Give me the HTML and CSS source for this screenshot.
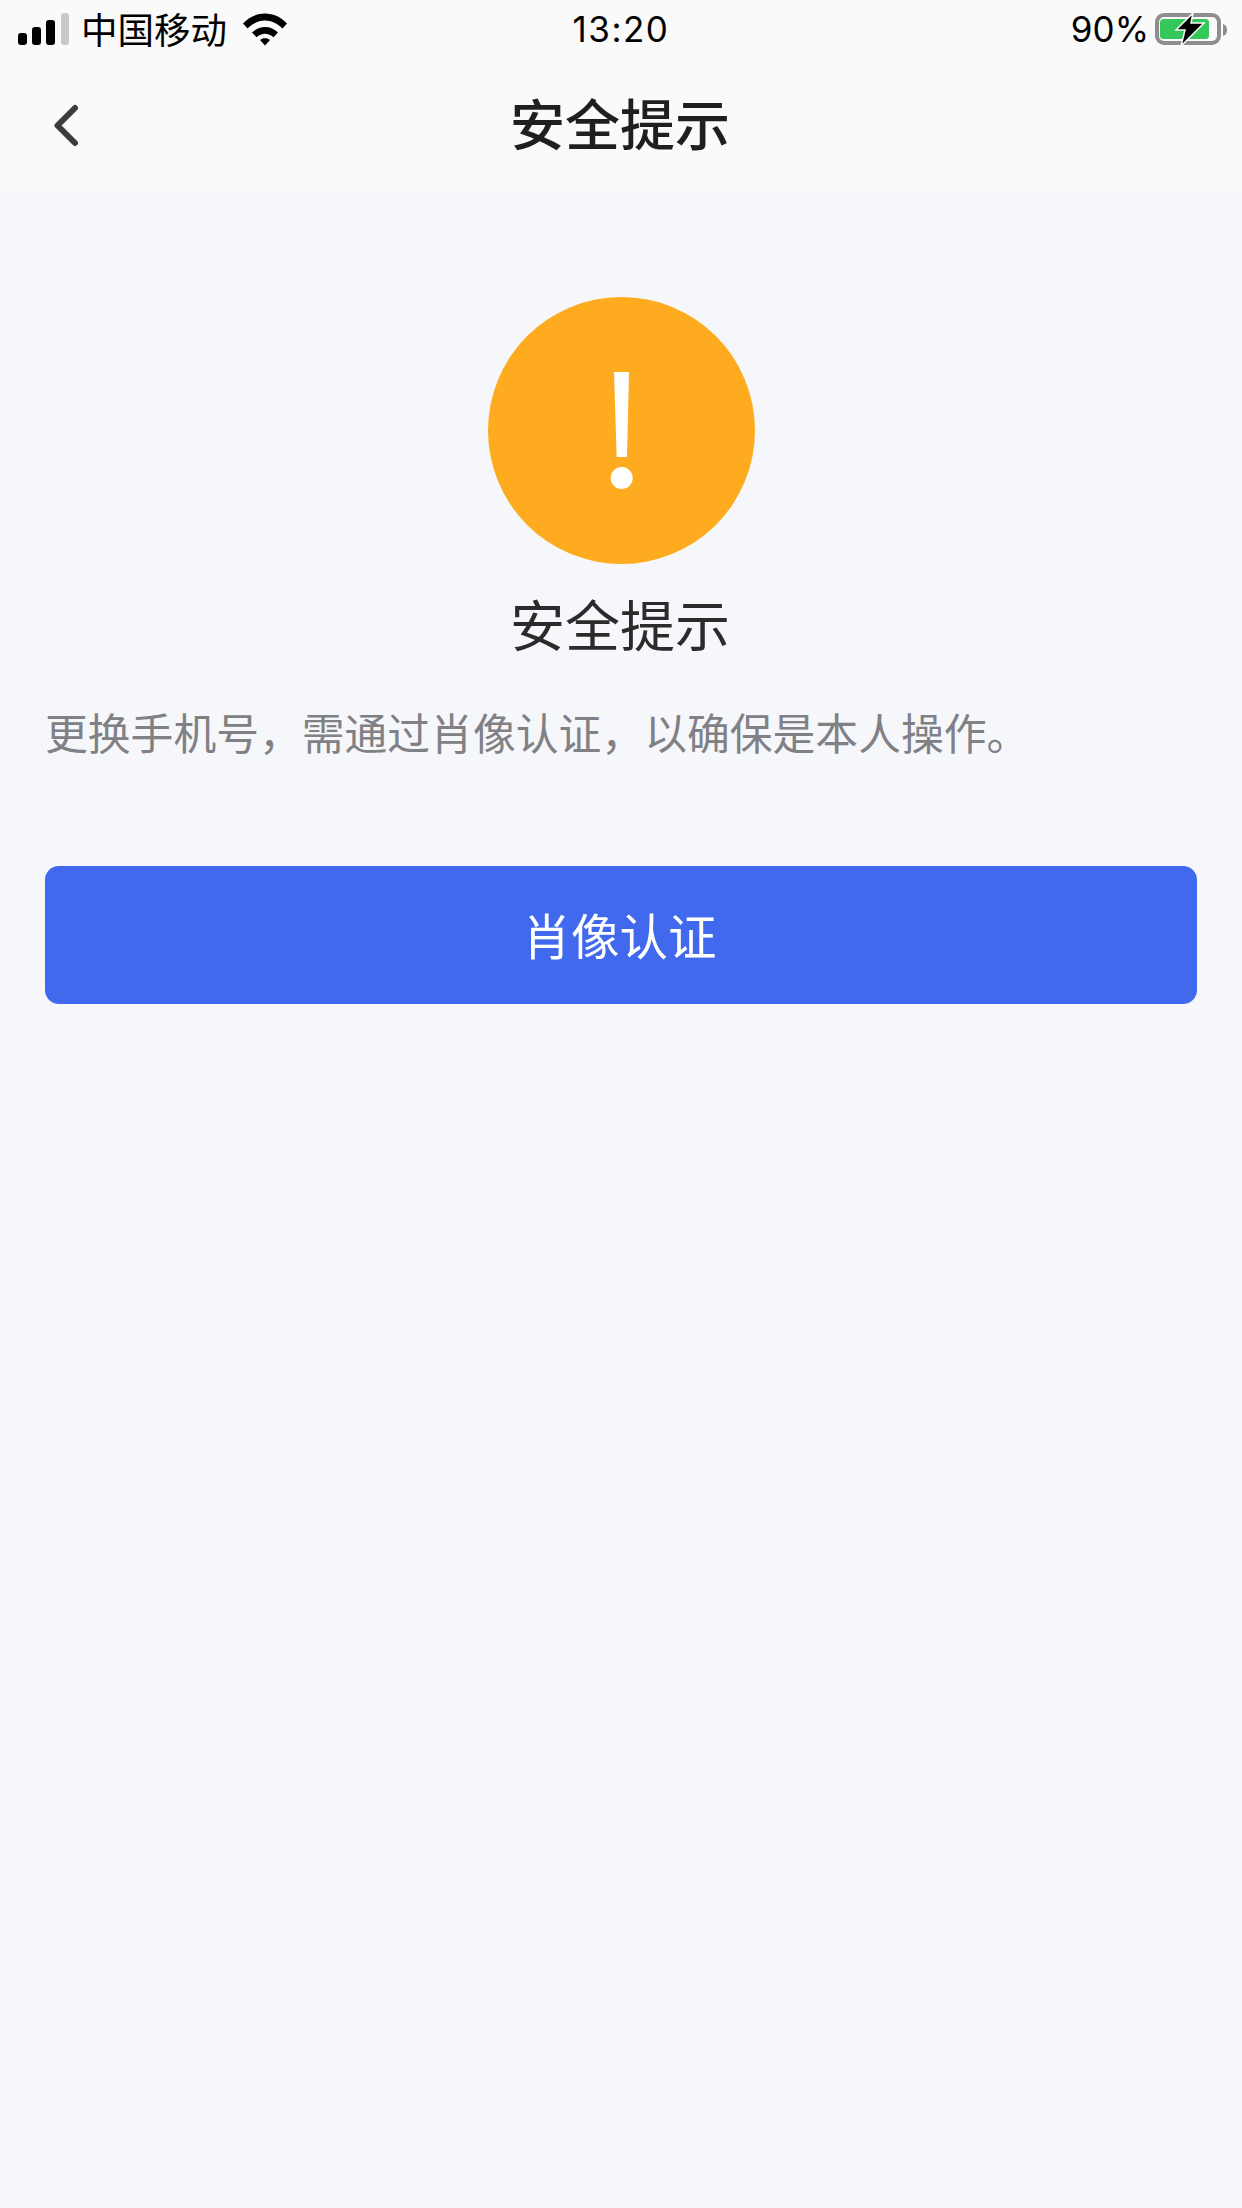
FILE: index.html
```html
<!DOCTYPE html>
<html lang="zh-CN">
<head>
    <meta charset="UTF-8">
    <meta name="viewport" content="width=device-width, initial-scale=1.0">
    <title>安全提示</title>
    <link rel="stylesheet" href="styles.css">
</head>
<body>
<!-- 顶部区域 -->
<header class="top">
    <div class="status-bar">
        <div class="status-left">
            <svg class="signal" width="52" height="32" viewBox="0 0 52 32">
                <rect x="0" y="20" width="9" height="12" rx="3" fill="#000"/>
                <rect x="14" y="14" width="9" height="18" rx="3" fill="#000"/>
                <rect x="28" y="7" width="9" height="25" rx="3" fill="#000"/>
                <rect x="43" y="0" width="8" height="32" rx="3" fill="#c8c8c8"/>
            </svg>
            <span class="carrier">中国移动</span>
            <svg class="wifi" width="46" height="34" viewBox="0 0 46 34">
                <path d="M1 11.5C7 5 14.5 1.5 23 1.5S39 5 45 11.5L40.5 16.5C35.5 11.5 29.5 8.5 23 8.5S10.5 11.5 5.5 16.5Z" fill="#000"/>
                <path d="M10 20.5C13.5 17 18 15 23 15S32.5 17 36 20.5L31.5 25.2C29 23 26 21.8 23 21.8S17 23 14.5 25.2Z" fill="#000"/>
                <path d="M18 28C19.5 26.8 21 26.2 23 26.2S26.5 26.8 28 28L23 33.5Z" fill="#000"/>
            </svg>
        </div>
        <span class="time">13:20</span>
        <div class="status-right">
            <span class="percent">90%</span>
            <svg class="battery" width="74" height="36" viewBox="0 0 74 36">
                <rect x="2" y="4" width="62" height="28" rx="7" fill="none" stroke="#8e8e8e" stroke-width="4"/>
                <rect x="5" y="8" width="49" height="20" rx="3.5" fill="#34c759"/>
                <path d="M68 13C71 14 72 16 72 19S71 24 68 25Z" fill="#8e8e8e"/>
                <path d="M38 2L21 19H30L26 35L49 12H36Z" fill="#000" stroke="#fafafa" stroke-width="1.5"/>
            </svg>
        </div>
    </div>
    <div class="nav-bar">
        <svg class="back" width="30" height="46" viewBox="0 0 30 46">
            <path d="M24 6L6.5 23.5L24 41" fill="none" stroke="#3c3c3c" stroke-width="6" stroke-linecap="round" stroke-linejoin="round"/>
        </svg>
        <h1>安全提示</h1>
    </div>
</header>

<!-- 提示内容 -->
<main class="content">
    <div class="warn-icon">
        <svg width="267" height="267" viewBox="0 0 267 267">
            <circle cx="133.5" cy="133.5" r="133.5" fill="#ffab1f"/>
            <path d="M126 75H141L139 160H128.7Z" fill="#fff"/>
            <circle cx="133.7" cy="181" r="11" fill="#fff"/>
        </svg>
    </div>
    <h2>安全提示</h2>
    <p class="desc">更换手机号，需通过肖像认证，以确保是本人操作。</p>
    <button class="primary-btn">肖像认证</button>
</main>
</body>
</html>
```

FILE: styles.css
```css
html, body {
    margin: 0;
    padding: 0;
}

body {
    width: 1242px;
    height: 2208px;
    overflow: hidden;
    background-color: #f5f7fb;
    font-family: "Noto Sans CJK SC", sans-serif;
}

.top {
    height: 192px;
    background-color: #fafafa;
}

.status-bar {
    height: 58px;
    padding: 0 13px;
    display: grid;
    grid-template-columns: 1fr auto 1fr;
    align-items: center;
    font-size: 36px;
    color: #000;
}

.status-left {
    display: flex;
    align-items: center;
    padding-left: 5px;
}

.carrier {
    margin-left: 11px;
    line-height: 58px;
    font-size: 36.5px;
}

.wifi {
    margin-left: 15px;
}

.time, .percent {
    font-family: Inter, "Liberation Sans", sans-serif;
    font-size: 35px;
}

.time {
    letter-spacing: 1.5px;
}

.status-right {
    display: flex;
    align-items: center;
    justify-content: flex-end;
}

.battery {
    margin-left: 6px;
}

.nav-bar {
    height: 125px;
    padding-bottom: 9px;
    display: flex;
    align-items: center;
    justify-content: center;
    position: relative;
}

.back {
    position: absolute;
    left: 51px;
    top: 44px;
}

.nav-bar h1 {
    margin: 0 2px 0 0;
    font-size: 55px;
    font-weight: 500;
    color: #1f1f1f;
}

.content {
    padding: 105px 45px 0;
    display: flex;
    flex-direction: column;
    align-items: center;
}

.warn-icon {
    height: 267px;
}

.warn-icon svg {
    display: block;
}

.content h2 {
    margin: 19px 2px 0 0;
    font-size: 55px;
    line-height: 78px;
    font-weight: 400;
    color: #2b2b2b;
}

.desc {
    align-self: stretch;
    margin: 39px 0 0;
    font-size: 42.8px;
    line-height: 62px;
    color: #808085;
}

.primary-btn {
    width: 100%;
    height: 138px;
    margin-top: 104px;
    padding: 0 3px 3px 0;
    border: none;
    border-radius: 14px;
    background-color: #4169ee;
    color: #fff;
    font-family: inherit;
    font-size: 48.5px;
}
```
